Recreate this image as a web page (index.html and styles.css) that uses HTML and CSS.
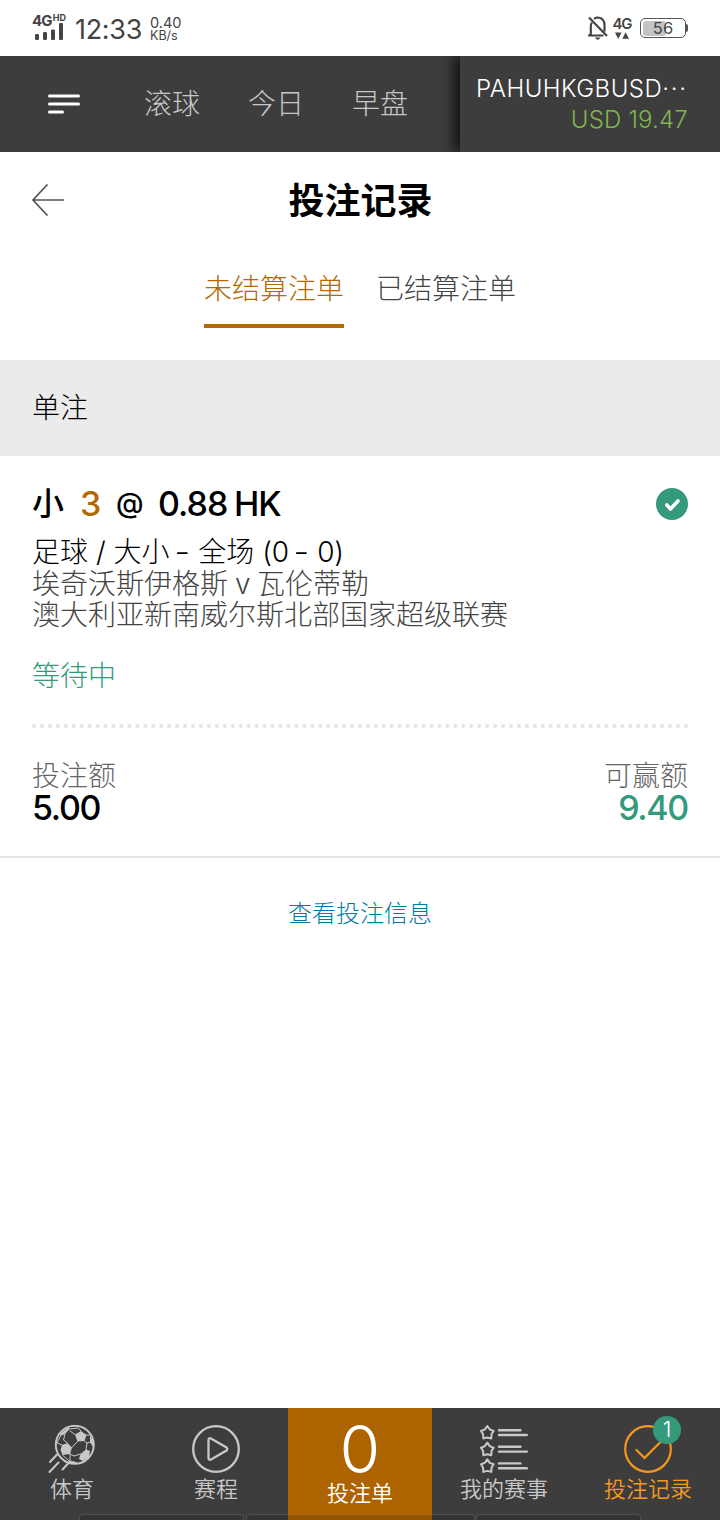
FILE: index.html
```html
<!DOCTYPE html>
<html lang="zh-CN">
<head>
<meta charset="utf-8">
<title>投注记录</title>
<link rel="stylesheet" href="styles.css">
</head>
<body>
<div class="app">
  <div class="status">
    <div class="signal">
      <div class="signal-label">4G<span class="hd">HD</span></div>
      <svg width="28" height="17" viewBox="0 0 28 17" fill="#444"><rect x="0" y="11" width="4" height="6" rx="1.2"/><rect x="8" y="9" width="4" height="8" rx="1.2"/><rect x="16" y="6.500" width="4" height="10.500" rx="1.200"/><rect x="24" y="0" width="4" height="17" rx="1.200"/></svg>
    </div>
    <div class="clock">12:33</div>
    <div class="speed"><div class="rate">0.40</div><div class="unit">KB/s</div></div>
    <div class="status-right">
      <svg class="bell" width="20" height="24" viewBox="0 0 20 24" fill="none" stroke="#444" stroke-width="2.200"><path d="M3.800 6.500Q2.800 8 2.800 11V18L1 19.500H15.500M6 2.800Q8 1.500 9.800 1.500Q16.500 2.200 16.500 9V15.500M1 1.500L19 20"/><path d="M7 21.500H12.500Q9.800 26 7 21.500Z" fill="#444" stroke="none"/></svg>
      <div class="net"><div class="net-label">4G</div><svg width="14" height="7" viewBox="0 0 14 7" fill="#444"><path d="M0 .5H6.500L3.200 7ZM7.300 6.800L10.600 .3L14 6.800Z"/></svg></div>
      <div class="battery"><div class="level"></div><span class="percent">56</span></div><div class="battery-cap"></div>
    </div>
  </div>
  <div class="topbar">
    <svg class="menu" width="32" height="20" viewBox="0 0 32 20" stroke="#fff" stroke-width="3" stroke-linecap="round"><path d="M1.500 2H30.500M1.500 10H30.500M1.500 18H14.500"/></svg>
    <div class="sports"><span>滚球</span><span>今日</span><span>早盘</span></div>
    <div class="account"><div class="user">PAHUHKGBUSD<span class="dots">···</span></div><div class="balance">USD 19.47</div></div>
  </div>
  <div class="heading">
    <svg class="back" width="32" height="32" viewBox="0 0 32 32" fill="none" stroke="#555" stroke-width="1.700"><path d="M15.500 .5L1 16L15.500 31.500M1 16H32"/></svg>
    <h1 class="title">投注记录</h1>
  </div>
  <div class="tabs"><div class="tab active">未结算注单</div><div class="tab">已结算注单</div></div>
  <div class="group">单注</div>
  <div class="bet">
    <div class="pick">
      <span class="side">小</span><span class="line">3</span><span class="at">@</span><span class="odds">0.88</span><span class="hk">HK</span>
      <svg class="ok" width="32" height="32" viewBox="0 0 32 32"><circle cx="16" cy="16" r="16" fill="#35997b"/><path d="M10.800 17L14.500 21L22 13" fill="none" stroke="#fff" stroke-width="3.600" stroke-linecap="round" stroke-linejoin="round"/></svg>
    </div>
    <div class="market">足球 / 大小 <span class="dash">–</span> 全场 <span class="score">(0 <span class="dash">–</span> 0)</span></div>
    <div class="match">埃奇沃斯伊格斯<span class="versus"> v </span>瓦伦蒂勒</div>
    <div class="league">澳大利亚新南威尔斯北部国家超级联赛</div>
    <div class="state">等待中</div>
    <svg class="dotted" width="656" height="4" viewBox="0 0 656 4"><path d="M2 2H655" stroke="#e4e4e4" stroke-width="4" stroke-linecap="round" stroke-dasharray="0 7.950"/></svg>
    <div class="amounts">
      <div><div class="label">投注额</div><div class="amount">5.00</div></div>
      <div class="win"><div class="label">可赢额</div><div class="amount">9.40</div></div>
    </div>
  </div>
  <div class="info">查看投注信息</div>
  <div class="nav">
    <div class="item">
      <svg width="48" height="48" viewBox="0 0 48 48" fill="none" stroke="#c8c8c8" stroke-linecap="round"><circle cx="26.800" cy="19.800" r="19" stroke-width="1.900"/><g fill="#c8c8c8" stroke="none"><path d="M27 9.500L33 6L38.500 10L36.500 16L29.500 16.500Z"/><path d="M14 20L19.500 18L24 22.500L22 29L14.500 30L12.500 25Z"/><path d="M32.500 29L38 24.500L42 26L41 32L35 36L31 34Z"/><path d="M12 9L20 2.500L22 3.500L17 9L12.500 11Z"/><path d="M42 10L45.500 17L45 22L42 17Z"/><path d="M20 35L28 37L30 39L21 38Z"/></g><path d="M22 4L30 3L33 6M22 6L27 9.500M12.500 11L9 18L14 20M17 9L15.500 15L19.500 18M29.500 16.500L24 22.500M36.500 16L39 18L38 24.500M22 29L26 31L32.500 29M22 29L22 35M14.500 30L20 35M38.500 10L42 10M39 18L43 17" stroke-width="1"/><path d="M9 29.500L2 37M10.500 37.500L1.500 47M20 38.500L14.500 44.500" stroke-width="2"/></svg>
      <span>体育</span>
    </div>
    <div class="item">
      <svg width="48" height="48" viewBox="0 0 48 48" fill="none" stroke="#c8c8c8" stroke-width="2.300"><circle cx="24" cy="24" r="22.800"/><path d="M16.500 15V33Q16.500 35.500 19 34.500L34.500 25.500Q36 24 34.500 22.500L19 13.500Q16.500 12.500 16.500 15Z"/></svg>
      <span>赛程</span>
    </div>
    <div class="item slip">
      <div class="slip-count">0</div>
      <span>投注单</span>
    </div>
    <div class="item">
      <svg width="48" height="48" viewBox="0 0 48 48" fill="none" stroke="#c8c8c8" stroke-width="2" stroke-linecap="round" stroke-linejoin="round"><defs><path id="star" d="M7.300 1L9.800 4.500L13.600 5.900L11.500 9.300L11.300 13.500L7.300 12.500L3.300 13.500L3.100 9.300L1 5.900L4.800 4.500Z"/></defs><use href="#star"/><use href="#star" y="16.700"/><use href="#star" y="33.400"/><path d="M19 5.200H40.500M19 10H46.800M19 21.700H40.500M19 26.600H46.800M19 38.400H40.500M19 43.200H46.800" stroke-width="2.400"/></svg>
      <span>我的赛事</span>
    </div>
    <div class="item current">
      <div class="badge-anchor"><svg width="48" height="48" viewBox="0 0 48 48" fill="none" stroke="#f7981d" stroke-width="2.200" stroke-linecap="round"><circle cx="24" cy="24" r="22.800"/><path d="M12.500 25L20.500 33L37 16.500"/></svg><div class="badge">1</div></div>
      <span>投注记录</span>
    </div>
    <div class="sysbar"><i></i><i></i><i></i></div>
  </div>
</div>
</body>
</html>
```
FILE: styles.css
```css
* { box-sizing: border-box; }
body { margin: 0; background: #fff; font-family: Inter, "Noto Sans CJK SC", sans-serif; font-weight: 300; color: #000; }
svg { display: block; flex: none; }
.app { width: 720px; height: 1520px; display: flex; flex-direction: column; overflow: hidden; white-space: nowrap; }
.status { height: 56px; flex: none; display: flex; padding-left: 32px; color: #444; font-weight: 400; }
.signal { width: 43px; padding-top: 14px; }
.signal-label { height: 9px; font-size: 15px; font-weight: 700; line-height: 14px; letter-spacing: -.8px; }
.hd { font-size: 9px; vertical-align: 5px; letter-spacing: 0; line-height: 1px; margin-left: 1px; }
.signal svg { margin-left: 3px; }
.clock { width: 75px; font-size: 27px; line-height: 59px; letter-spacing: -.3px; }
.speed { padding-top: 16px; }
.rate { font-size: 14.5px; line-height: 14px; }
.unit { font-size: 12.5px; line-height: 11px; }
.status-right { margin-left: auto; display: flex; padding-right: 32px; padding-top: 16px; }
.bell { margin-right: 3px; }
.net { width: 22px; display: flex; flex-direction: column; align-items: center; }
.net-label { font-size: 15px; font-weight: 600; line-height: 15px; letter-spacing: -1px; }
.net svg { margin-top: 1px; }
.battery { margin: 2px 0 0 7px; width: 46px; height: 20px; border: 1.500px solid #555; border-radius: 5px; padding: 2px; display: grid; }
.battery > * { grid-area: 1 / 1; }
.level { width: 23px; background: #c4c4c4; border-radius: 3px; }
.percent { font-size: 16.500px; line-height: 15px; text-align: center; }
.battery-cap { width: 2px; height: 8px; margin-top: 8px; background: #555; border-radius: 0 2px 2px 0; }
.topbar { height: 96px; flex: none; display: flex; background: #3d3d3d; overflow: hidden; }
.menu { margin: 38px 0 0 48px; }
.sports { margin-left: 64px; display: flex; gap: 48px; font-size: 28px; line-height: 97px; color: #c8c8c8; }
.account { margin-left: auto; width: 260px; padding: 17px 32px 0 16px; background: #3d3d3d; box-shadow: -6px 0 12px #000b; color: #fff; }
.user { font-size: 24px; line-height: 32px; letter-spacing: .48px; }
.dots { letter-spacing: 1.8px; }
.balance { font-size: 24px; line-height: 30px; text-align: right; color: #7fb54c; letter-spacing: .2px; }
.heading { height: 96px; flex: none; display: grid; grid-template-columns: 32px 1fr 32px; align-items: center; padding: 0 32px; }
.title { margin: 0; padding-top: 2px; padding-left: 1px; font-size: 36px; line-height: 94px; font-weight: 700; text-align: center; }
.tabs { height: 112px; flex: none; display: flex; justify-content: center; gap: 32px; font-size: 28px; color: #444; }
.tab { width: 140px; height: 80px; line-height: 82px; }
.active { color: #b36900; border-bottom: 4px solid #b36900; }
.group { height: 96px; flex: none; padding-left: 32px; background: #ebebeb; font-size: 28px; line-height: 97px; }
.bet { height: 402px; flex: none; padding: 24px 32px 0; border-bottom: 2px solid #e4e4e4; font-size: 28px; color: #444; }
.pick { display: flex; align-items: center; height: 48px; font-size: 34px; font-weight: 500; letter-spacing: -1px; line-height: 48px; color: #000; }
.side { width: 48px; font-size: 32px; font-weight: 500; }
.line { width: 36px; color: #b36900; }
.at { width: 42px; font-size: 28px; padding-bottom: 3px; }
.odds { width: 76px; }
.ok { margin-left: auto; }
.market { margin-top: 8px; line-height: 32px; color: #000; }
.dash { display: inline-block; width: 13px; transform: scaleX(.75); transform-origin: 0 0; }
.score { letter-spacing: -.2px; }
.versus { letter-spacing: -.8px; }
.match { line-height: 32px; }
.league { line-height: 30px; }
.state { margin-top: 30px; line-height: 32px; color: #35997b; }
.dotted { margin-top: 32px; }
.amounts { margin-top: 32px; display: flex; justify-content: space-between; }
.label { line-height: 32px; color: #666; }
.amount { font-size: 34px; line-height: 32px; font-weight: 500; letter-spacing: -1.300px; color: #000; }
.win { text-align: right; }
.win .amount { color: #35997b; }
.info { flex: 1; padding-top: 39px; font-size: 24px; line-height: 34px; color: #007aa5; text-align: center; }
.nav { height: 112px; flex: none; display: grid; grid-template-columns: repeat(5, 144px); background: #3d3d3d; color: #c8c8c8; font-size: 22px; font-weight: 350; position: relative; }
.item { display: flex; flex-direction: column; align-items: center; padding-top: 17px; line-height: 32px; }
.slip { background: #ad6300; color: #fff; }
.slip span { margin-top: 4px; }
.slip-count { height: 48px; font-size: 66px; line-height: 48px; }
.current { color: #f7981d; }
.badge-anchor { position: relative; }
.badge { position: absolute; left: 29px; top: -9px; width: 28px; height: 28px; border-radius: 50%; background: #35997b; color: #fff; font-size: 22px; line-height: 27px; text-align: center; }
.sysbar { position: absolute; left: 79px; bottom: 0; width: 562px; height: 6px; display: grid; grid-template-columns: 165px 229px 165px; gap: 1.500px; overflow: hidden; }
.sysbar i { height: 12px; border: 1px solid #ffffff20; border-radius: 4px; background: #0002; }
```
